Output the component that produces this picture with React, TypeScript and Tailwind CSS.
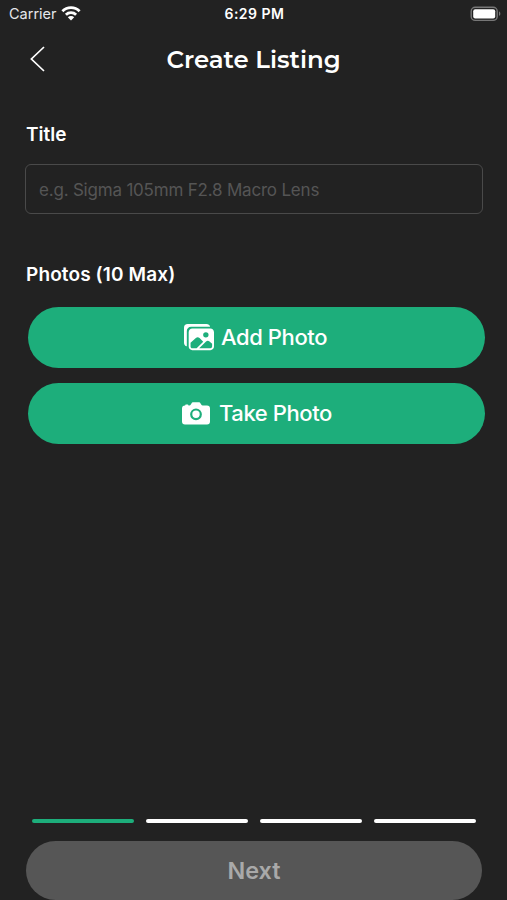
import { useState, ReactNode } from 'react';
import { IoImages } from 'react-icons/io5';

const STEPS = [1, 2, 3, 4];

function WifiIcon() {
    return (
        <svg width="20" height="15" viewBox="0 0 20 15" fill="none" stroke="white" strokeWidth="2.8">
            <path d="M1.4 5.2a12.2 12.2 0 0 1 17.2 0" />
            <path d="M4.9 8.8a7.3 7.3 0 0 1 10.2 0" />
            <path d="M10 14.4 6.8 11.3a4.5 4.5 0 0 1 6.4 0z" fill="white" stroke="none" />
        </svg>
    );
}

function BatteryIcon() {
    return (
        <svg width="32" height="16" viewBox="0 0 32 16" fill="none">
            <rect x="1.2" y="1.2" width="26" height="13.2" rx="4" stroke="#777777" strokeWidth="1.4" />
            <rect x="3.2" y="3.2" width="22" height="9.2" rx="2" fill="white" />
            <path d="M29 5.6c1.8.6 1.8 3.8 0 4.4z" fill="#777777" />
        </svg>
    );
}

function CameraIcon() {
    return (
        <svg width="28" height="23" viewBox="0 0 28 23" fill="none">
            <path
                d="M3.2 3.6V3.2q0-.7.7-.7h1.8q.7 0 .7.7v.3h.9c.7 0 1.1-.4 1.5-1l.8-1.3C10 .5 10.4.2 11.2.2h5.6c.8 0 1.2.3 1.6 1l.8 1.3c.4.6.8 1 1.5 1H25a3 3 0 0 1 3 3v13a3 3 0 0 1-3 3H3a3 3 0 0 1-3-3v-13a3 3 0 0 1 3-3z"
                fill="white"
            />
            <circle cx="14" cy="12.3" r="4.8" stroke="#1dae7b" strokeWidth="2.2" />
        </svg>
    );
}

function StatusBar() {
    return (
        <div className="grid h-[27px] grid-cols-3 items-center pl-[9px] pr-[5px] text-white">
            <div className="flex items-center gap-1">
                <span className="pt-px text-[14.5px] leading-none text-gray-200">Carrier</span>
                <WifiIcon />
            </div>
            <span className="pr-[2px] text-center text-[14px] leading-none font-semibold tracking-[0.5px]">6:29 PM</span>
            <div className="flex justify-end">
                <BatteryIcon />
            </div>
        </div>
    );
}

function Header() {
    return (
        <header className="grid h-16 grid-cols-[1fr_auto_1fr] items-center">
            <button className="pl-[29px]">
                <svg width="17" height="28" viewBox="0 0 17 28" fill="none" stroke="white" strokeWidth="1.7">
                    <path d="M15 2 2.4 14 15 26" />
                </svg>
            </button>
            <h1 className="font-['Montserrat','Inter',sans-serif] text-[24.4px] leading-none font-semibold text-white">
                Create Listing
            </h1>
        </header>
    );
}

function PhotoButton({ icon, label }: { icon: ReactNode; label: string }) {
    return (
        <button className="flex h-[61px] w-full items-center justify-center rounded-full bg-[#1dae7b] pr-[2px] text-[22px] font-medium tracking-[-0.4px] text-white">
            {icon}
            <span>{label}</span>
        </button>
    );
}

function StepIndicator({ current }: { current: number }) {
    return (
        <div className="mx-8 grid w-[444px] grid-cols-4 gap-3">
            {STEPS.map((step) => (
                <div
                    key={step}
                    className={`h-1 rounded-full ${step <= current ? 'bg-[#1dae7b]' : 'bg-white'}`}
                />
            ))}
        </div>
    );
}

export default function App() {
    const [title, setTitle] = useState('');

    return (
        <div className="flex h-screen flex-col overflow-hidden bg-[#222222] font-['Inter',sans-serif]">
            <StatusBar />
            <Header />

            <main className="flex-1">
                <div className="pt-8 pr-6 pl-[25px]">
                    <label htmlFor="title" className="block pl-px text-[19px] leading-6 font-semibold text-white">
                        Title
                    </label>
                    <input
                        id="title"
                        value={title}
                        onChange={(e) => setTitle(e.target.value)}
                        placeholder="e.g. Sigma 105mm F2.8 Macro Lens"
                        className="mt-[17px] block h-[50px] w-full rounded-[6px] border-[1.5px] border-[#4a4a4a] bg-transparent px-[13px] pt-px text-[17px] tracking-[-0.2px] text-white outline-none placeholder:text-[#555555]"
                    />
                </div>

                <h2 className="mt-[49px] pl-[26px] text-[19px] leading-6 font-semibold tracking-[0.12px] text-white">
                    Photos (10 Max)
                </h2>
                <div className="mt-[19.5px] flex flex-col gap-[15px] pr-[22px] pl-7">
                    <PhotoButton icon={<IoImages size={30} className="mr-[7px]" />} label="Add Photo" />
                    <PhotoButton
                        icon={
                            <span className="mr-[9px] ml-[3px]">
                                <CameraIcon />
                            </span>
                        }
                        label="Take Photo"
                    />
                </div>
            </main>

            <StepIndicator current={1} />
            <button
                disabled
                className="mt-[18px] mr-[25px] ml-[26px] h-[59px] shrink-0 rounded-full bg-[#565656] pt-px text-[23.4px] font-semibold text-[#a9a9a9]"
            >
                Next
            </button>
        </div>
    );
}
